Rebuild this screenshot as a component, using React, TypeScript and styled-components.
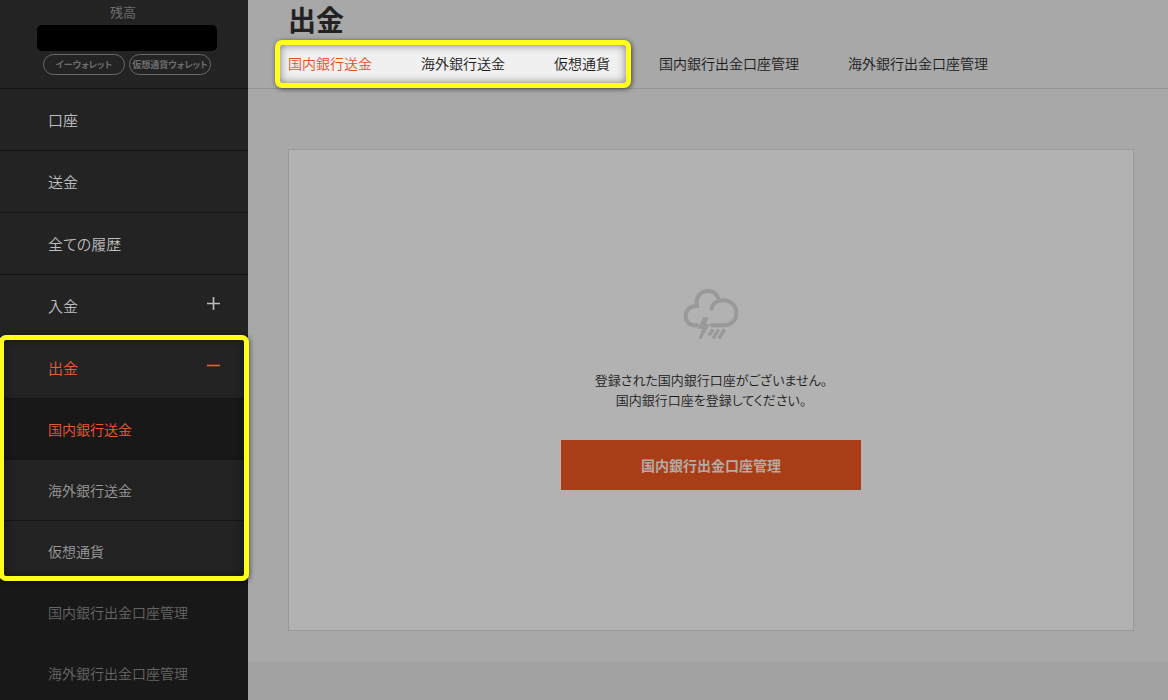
import React from "react";
import styled, { createGlobalStyle, css } from "styled-components";

const GlobalStyle = createGlobalStyle`
  *, *::before, *::after { box-sizing: border-box; }
  html { scrollbar-width: none; }
  body {
    margin: 0;
    background: #a3a3a3;
    color: #1c1c1c;
    font-family: "Noto Sans CJK JP", sans-serif;
    font-size: 14px;
    font-weight: 350;
  }
  h1, p, ul { margin: 0; padding: 0; }
  ul { list-style: none; }
  a { color: inherit; text-decoration: none; }
  button { font-family: inherit; font-weight: inherit; cursor: pointer; }
`;

/* Yellow marker frame drawn around a group of links. */
const markerFrame = css`
  position: absolute;
  border: 5px solid #ffff1a;
  border-radius: 7px;
  pointer-events: none;
  content: "";
`;

const Page = styled.div`
  display: grid;
  grid-template-columns: 248px minmax(0, 1fr);
  min-height: 100vh;
`;

const Sidebar = styled.aside`
  background: #232323;
  color: #bdbdbd;
`;

const Balance = styled.section`
  height: 88px;
  padding: 3px 31px 0 37px;
`;

const BalanceLabel = styled.p`
  padding-right: 8px;
  color: #6e6e6e;
  font-size: 13px;
  font-weight: 400;
  line-height: 18px;
  text-align: center;
`;

const BalanceAmount = styled.div`
  height: 26px;
  margin-top: 4px;
  border-radius: 5px;
  background: #000;
`;

const Wallets = styled.div`
  display: flex;
  justify-content: center;
  gap: 4px;
  margin-top: 3px;
`;

const WalletButton = styled.button`
  display: flex;
  align-items: center;
  justify-content: center;
  width: 82px;
  height: 21px;
  padding: 0;
  border: 1px solid #6a6a6a;
  border-radius: 11px;
  background: none;
  color: #6e6e6e;
  font-size: 9px;
  font-weight: 700;
  font-feature-settings: "palt";
  white-space: nowrap;
`;

const rowStyle = css`
  display: flex;
  align-items: center;
  justify-content: space-between;
  width: 100%;
  padding: 0 28px 0 48px;
  border: 0;
  border-top: 1px solid #121212;
  background: none;
  text-align: left;
`;

const MenuLink = styled.a`
  ${rowStyle}
  height: 62px;
  font-size: 15px;
  font-feature-settings: "palt";
`;

const MenuToggle = styled.button<{ $open?: boolean }>`
  ${rowStyle}
  height: 62px;
  color: ${(p) => (p.$open ? "#f05a30" : "#bdbdbd")};
  font-size: 15px;

  svg { margin-bottom: 4px; }
`;

const SubLink = styled.a<{ $tone: "active" | "lit" | "dim" }>`
  ${rowStyle}
  height: 61px;
  border-top-color: #151515;
  background: ${(p) => (p.$tone === "lit" ? "#222" : "#181818")};
  color: ${(p) => ({ active: "#f05a30", lit: "#999", dim: "#666" })[p.$tone]};
`;

const MarkedMenu = styled.li`
  position: relative;

  &::after {
    ${markerFrame}
    inset: -1px -1px 0 -1px;
    box-shadow: 1px 1px 5px rgba(0, 0, 0, 0.5), inset 0 0 9px rgba(0, 0, 0, 0.4);
  }
`;

const Main = styled.main`
  display: flex;
  flex-direction: column;
  min-width: 0;
  background: #a8a8a8;
`;

const Header = styled.header`
  padding: 0 40px 3px;
  border-bottom: 1px solid #969696;
`;

const Title = styled.h1`
  padding-bottom: 3px;
  color: #222;
  font-size: 28px;
  font-weight: 700;
  line-height: 38px;
`;

const Tabs = styled.nav`
  display: flex;
  gap: 49px;
  line-height: 44px;
  white-space: nowrap;
`;

const MarkedTabs = styled.div`
  position: relative;
  isolation: isolate;
  display: flex;
  gap: 49px;

  &::before {
    ${markerFrame}
    inset: -1px -21px -3px -13px;
    z-index: -1;
    background: #f0f0f0;
    box-shadow: 1px 1px 5px rgba(0, 0, 0, 0.6), inset 0 0 9px rgba(0, 0, 0, 0.5);
  }
`;

const Tab = styled.a<{ $active?: boolean }>`
  color: ${(p) => (p.$active ? "#e5501f" : "#1c1c1c")};
`;

const Card = styled.section`
  display: flex;
  flex-direction: column;
  align-items: center;
  margin: 60px 34px 30px 40px;
  padding: 135px 20px 140px;
  border: 1px solid #999;
  background: #b2b2b2;
`;

const Message = styled.p`
  margin: 25px 0 30px;
  font-size: 13px;
  line-height: 20px;
  text-align: center;
  font-feature-settings: "palt";
`;

const PrimaryButton = styled.button`
  width: 300px;
  max-width: 100%;
  height: 50px;
  padding: 0;
  border: 0;
  background: #a93d17;
  color: #b5aaa5;
  font-size: 14px;
  font-weight: 700;
`;

const Footer = styled.footer`
  flex: 1;
  background: #a3a3a3;
`;

const ToggleIcon = ({ open }: { open?: boolean }) => (
  <svg width="13" height="13" viewBox="0 0 13 13" stroke="currentColor" strokeWidth="1.6" aria-hidden="true">
    <path d={open ? "M0 6.5H13" : "M0 6.5H13M6.5 0V13"} />
  </svg>
);

const StormIcon = () => (
  <svg width="62" height="60" viewBox="0 0 186 180" fill="none" stroke="#999" strokeWidth="12" aria-hidden="true">
    <path
      d="M51 121H45C29 121 17 108 17 93C17 75 31 62 51 63C46 37 61 18 84 18C100 18 111 27 116 42"
      strokeLinecap="round"
    />
    <path d="M94 71C98 55 112 46 130 46C152 46 169 62 169 84C169 106 153 121 132 121H96" strokeLinecap="round" />
    <path d="M70 97H85L78 117H90L64 162H56L66 131H53Z" fill="#999" stroke="none" />
    <path d="M99 133L87 151M116 133L99 160M134 133L122 151" strokeWidth="10" />
    <path d="M134 133L117 160" strokeWidth="10" />
  </svg>
);

const menu = ["口座", "送金", "全ての履歴"];

export default function App() {
  return (
    <>
      <GlobalStyle />
      <Page>
        <Sidebar>
          <Balance>
            <BalanceLabel>残高</BalanceLabel>
            <BalanceAmount />
            <Wallets>
              <WalletButton type="button">イーウォレット</WalletButton>
              <WalletButton type="button">仮想通貨ウォレット</WalletButton>
            </Wallets>
          </Balance>
          <nav>
            <ul>
              {menu.map((label) => (
                <li key={label}>
                  <MenuLink href="#">{label}</MenuLink>
                </li>
              ))}
              <li>
                <MenuToggle type="button" aria-expanded={false}>
                  入金
                  <ToggleIcon />
                </MenuToggle>
              </li>
              <MarkedMenu>
                <MenuToggle type="button" aria-expanded $open>
                  出金
                  <ToggleIcon open />
                </MenuToggle>
                <SubLink href="#" $tone="active">国内銀行送金</SubLink>
                <SubLink href="#" $tone="lit">海外銀行送金</SubLink>
                <SubLink href="#" $tone="lit">仮想通貨</SubLink>
              </MarkedMenu>
              <li>
                <SubLink href="#" $tone="dim">国内銀行出金口座管理</SubLink>
              </li>
              <li>
                <SubLink href="#" $tone="dim">海外銀行出金口座管理</SubLink>
              </li>
            </ul>
          </nav>
        </Sidebar>
        <Main>
          <Header>
            <Title>出金</Title>
            <Tabs>
              <MarkedTabs>
                <Tab href="#" $active>国内銀行送金</Tab>
                <Tab href="#">海外銀行送金</Tab>
                <Tab href="#">仮想通貨</Tab>
              </MarkedTabs>
              <Tab href="#">国内銀行出金口座管理</Tab>
              <Tab href="#">海外銀行出金口座管理</Tab>
            </Tabs>
          </Header>
          <Card>
            <StormIcon />
            <Message>
              登録された国内銀行口座がございません。
              <br />
              国内銀行口座を登録してください。
            </Message>
            <PrimaryButton type="button">国内銀行出金口座管理</PrimaryButton>
          </Card>
          <Footer />
        </Main>
      </Page>
    </>
  );
}
